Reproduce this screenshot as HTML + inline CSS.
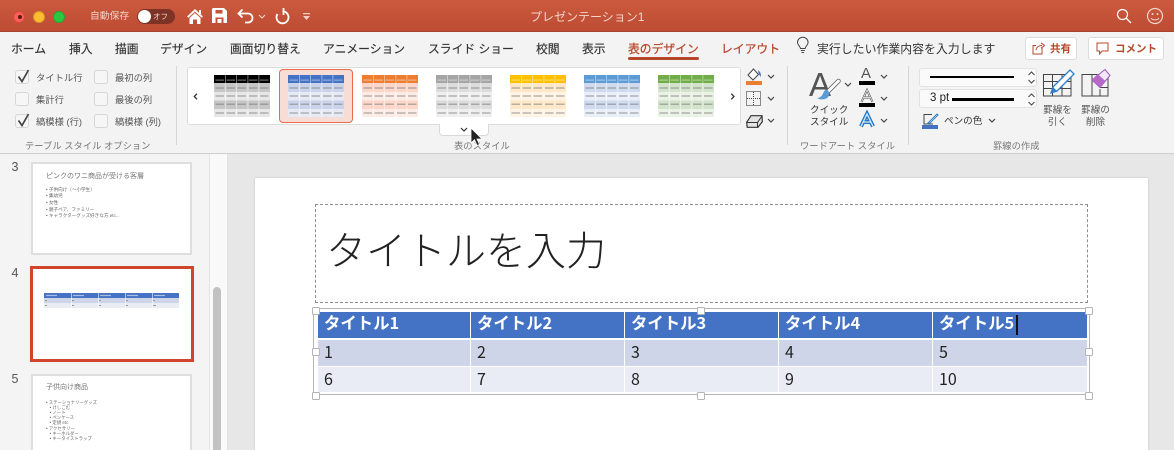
<!DOCTYPE html>
<html lang="ja"><head><meta charset="utf-8"><title>プレゼンテーション1</title>
<style>
*{box-sizing:border-box}
html,body{margin:0;padding:0;width:1174px;height:450px;overflow:hidden;background:#f3f3f3}
body{position:relative;font-family:"Liberation Sans","Noto Sans CJK JP",sans-serif;color:#333}
.a{position:absolute;white-space:nowrap}
.tab{position:absolute;top:41px;font-size:11.8px;line-height:16px;color:#333;white-space:nowrap;-webkit-text-stroke:.15px #333}
.lb{position:absolute;font-size:9.3px;line-height:14px;color:#555;white-space:nowrap}
.gl{position:absolute;top:138.500px;font-size:9.3px;line-height:14px;color:#777;white-space:nowrap}
.cb{position:absolute;width:14px;height:14px;background:#f6f6f6;border:1px solid #d6d6d6;border-radius:3px}
.sep{position:absolute;top:66px;height:79px;width:1px;background:#d6d6d6}
svg{position:absolute;overflow:visible}
.th{position:absolute;background:#4472c4;color:#fff;font-family:"Noto Sans CJK JP",sans-serif;font-weight:700;font-size:16.4px;line-height:20px;padding-left:6px;white-space:nowrap}
.c{position:absolute;height:26px;font-family:"Noto Sans CJK JP",sans-serif;font-size:16px;line-height:22px;padding-left:6px;color:#222}
.h{position:absolute;width:8px;height:8px;background:#fff;border:1px solid #b4b4b4;border-radius:1.5px}
.mini{position:absolute;font-size:4.6px;line-height:6.700px;color:#666;white-space:nowrap;filter:blur(.25px)}
.t{filter:blur(.25px)}
</style></head><body>
<svg width="0" height="0" style="position:absolute">
<defs>
<symbol id="tb" viewBox="0 0 56 42" overflow="visible">
<rect x="0" y="0" width="56" height="8" fill="currentColor"/>
<rect x="0" y="8" width="56" height="9" style="fill:var(--a)"/>
<rect x="0" y="17" width="56" height="8.500" style="fill:var(--b)"/>
<rect x="0" y="25.500" width="56" height="8.500" style="fill:var(--a)"/>
<rect x="0" y="34" width="56" height="8" style="fill:var(--b)"/>
<g fill="#fff" opacity=".55"><rect x="11" width=".8" height="42"/><rect x="22" width=".8" height="42"/><rect x="33.500" width=".8" height="42"/><rect x="44.500" width=".8" height="42"/></g>
<g fill="#fff" opacity=".8"><path d="M1.500 4.700h8.500v.7H1.500zM12.500 4.700H21v.7h-8.500zM23.500 4.700H32v.7h-8.500zM35 4.700h8.500v.7H35zM46 4.700h8.500v.7H46z"/></g>
<g fill="#757575"><path d="M1.500 12.600h8.500v.8H1.500zM12.500 12.600H21v.8h-8.500zM23.500 12.600H32v.8h-8.500zM35 12.600h8.500v.8H35zM46 12.600h8.500v.8H46zM1.500 20.600h8.500v.8H1.500zM12.500 20.600H21v.8h-8.500zM23.500 20.600H32v.8h-8.500zM35 20.600h8.500v.8H35zM46 20.600h8.500v.8H46zM1.500 28.700h8.500v.8H1.500zM12.500 28.700H21v.8h-8.500zM23.500 28.700H32v.8h-8.500zM35 28.700h8.500v.8H35zM46 28.700h8.500v.8H46zM1.500 37.600h8.500v.8H1.500zM12.500 37.600H21v.8h-8.500zM23.500 37.600H32v.8h-8.500zM35 37.600h8.500v.8H35zM46 37.600h8.500v.8H46z"/></g>
</symbol>
</defs></svg>

<!-- title bar -->
<div class="a" style="left:0;top:0;width:1174px;height:32px;background:linear-gradient(#cb5a3e,#bd4c33);border-bottom:1px solid #a8432d"></div>
<div class="a" style="left:13px;top:11px;width:12px;height:12px;border-radius:50%;background:#fc5f57;border:1px solid #d9483f"></div>
<div class="a" style="left:17.500px;top:15px;width:4px;height:4px;border-radius:50%;background:#5a1a14"></div>
<div class="a" style="left:33px;top:11px;width:12px;height:12px;border-radius:50%;background:#fdbc2e;border:1px solid #d8992a"></div>
<div class="a" style="left:53px;top:11px;width:12px;height:12px;border-radius:50%;background:#2ac73f;border:1px solid #27a336"></div>
<div class="a" style="left:90px;top:9px;font-size:9.800px;line-height:16px;color:#f1cfc5">自動保存</div>
<div class="a" style="left:137px;top:9px;width:38px;height:15px;border-radius:8px;background:#7d3325"></div>
<div class="a" style="left:138px;top:10px;width:13px;height:13px;border-radius:50%;background:#fff"></div>
<div class="a" style="left:153px;top:10.500px;font-size:7.500px;line-height:12px;color:#eed5cd">オフ</div>
<svg style="left:186px;top:8px" width="18" height="16" viewBox="0 0 18 16"><path d="M9 1 1 8.500l1.300 1.300L9 3.600l6.700 6.200L17 8.500z" fill="#fff"/><path d="M3.500 10 9 5l5.500 5v6H11v-4.500H7V16H3.500z" fill="#fff"/><rect x="13" y="2" width="2" height="4" fill="#fff"/></svg>
<svg style="left:212px;top:8px" width="15" height="15" viewBox="0 0 15 15"><path d="M1 0h11l3 3v12H0V1z" fill="#fff"/><rect x="3.500" y="2" width="7" height="3.500" fill="#c5533a"/><rect x="3.500" y="9.500" width="8" height="5.500" fill="#c5533a"/><rect x="5.500" y="11" width="4" height="4" fill="#fff"/></svg>
<svg style="left:237px;top:8px" width="17" height="16" viewBox="0 0 17 16"><path d="M5.500 1.500 1.500 5.500l4 4M1.500 5.500H11a4.500 4.500 0 0 1 0 9H8" fill="none" stroke="#fff" stroke-width="1.800"/></svg>
<svg style="left:258px;top:14px" width="8" height="5" viewBox="0 0 8 5"><path d="M1 1l3 3 3-3" fill="none" stroke="#f5d9d0" stroke-width="1.100"/></svg>
<svg style="left:274px;top:8px" width="16" height="17" viewBox="0 0 16 17"><path d="M3.500 6A6 6 0 1 0 10 3.500" fill="none" stroke="#fff" stroke-width="1.800"/><path d="M9.500 0v7" stroke="#fff" stroke-width="1.800"/></svg>
<svg style="left:303px;top:13px" width="8" height="8" viewBox="0 0 8 8"><path d="M0 0h7v1.300H0zM0 3h7L3.500 7z" fill="#f1cfc5"/></svg>
<div class="a" style="left:530px;top:9px;font-size:12px;line-height:16px;color:#f3d5cc">プレゼンテーション1</div>
<svg style="left:1116px;top:8px" width="16" height="16" viewBox="0 0 16 16"><circle cx="6.500" cy="6.500" r="5" fill="none" stroke="#fff" stroke-width="1.200"/><path d="M10 10l5 5" stroke="#fff" stroke-width="1.300"/></svg>
<svg style="left:1146px;top:7px" width="18" height="18" viewBox="0 0 18 18"><circle cx="9" cy="9" r="7.500" fill="none" stroke="#f3d5cc" stroke-width="1.200"/><circle cx="6.500" cy="7" r="1" fill="#f3d5cc"/><circle cx="11.500" cy="7" r="1" fill="#f3d5cc"/><path d="M5 11c1.500 2.500 6.500 2.500 8 0" fill="none" stroke="#f3d5cc" stroke-width="1.100"/></svg>

<!-- tabs -->
<div class="tab" style="left:11px">ホーム</div>
<div class="tab" style="left:69px">挿入</div>
<div class="tab" style="left:115px">描画</div>
<div class="tab" style="left:160px">デザイン</div>
<div class="tab" style="left:230px">画面切り替え</div>
<div class="tab" style="left:323px">アニメーション</div>
<div class="tab" style="left:428px">スライド ショー</div>
<div class="tab" style="left:536px">校閲</div>
<div class="tab" style="left:582px">表示</div>
<div class="tab" style="left:628px;color:#b7472a;-webkit-text-stroke:.25px #b7472a">表のデザイン</div>
<div class="a" style="left:628px;top:57px;width:71px;height:2.500px;border-radius:2px;background:#b7472a"></div>
<div class="tab" style="left:721px;color:#b7472a;-webkit-text-stroke:.25px #b7472a">レイアウト</div>
<svg style="left:796px;top:37px" width="14" height="17" viewBox="0 0 14 17"><path d="M4.500 11.500C4 9 1.500 8 1.500 5.500a5.300 5.300 0 0 1 10.600 0c0 2.500-2.500 3.500-3 6z" fill="none" stroke="#444" stroke-width="1"/><path d="M4.800 13.500h4M5.500 15.500h2.600" stroke="#444" stroke-width="1"/></svg>
<div class="a" style="left:817px;top:41px;font-size:11.900px;line-height:16px;color:#333">実行したい作業内容を入力します</div>
<div class="a" style="left:1025px;top:37px;width:52px;height:23px;background:#fff;border:1px solid #dcdcdc;border-radius:3px"></div>
<svg style="left:1032px;top:42px" width="14" height="13" viewBox="0 0 14 13"><path d="M10 5.500V12H1V3.500h3" fill="none" stroke="#b7472a" stroke-width="1"/><path d="M4 8c.5-3 3-4.500 6-4.500M9 .8l3.500 2.700L9 6.200" fill="none" stroke="#b7472a" stroke-width="1"/></svg>
<div class="a" style="left:1050px;top:41px;font-size:10.500px;line-height:16px;font-weight:700;color:#b7472a">共有</div>
<div class="a" style="left:1088px;top:37px;width:76px;height:23px;background:#fff;border:1px solid #dcdcdc;border-radius:3px"></div>
<svg style="left:1096px;top:42px" width="14" height="13" viewBox="0 0 14 13"><path d="M1 1h11v8H6l-2.500 3V9H1z" fill="none" stroke="#b7472a" stroke-width="1"/></svg>
<div class="a" style="left:1115px;top:41px;font-size:10.500px;line-height:16px;font-weight:700;color:#b7472a">コメント</div>

<!-- table style options -->
<div class="cb" style="left:15px;top:70px"></div><div class="cb" style="left:15px;top:92px"></div><div class="cb" style="left:15px;top:114px"></div>
<div class="cb" style="left:94px;top:70px"></div><div class="cb" style="left:94px;top:92px"></div><div class="cb" style="left:94px;top:114px"></div>
<svg style="left:16px;top:69px" width="14" height="14" viewBox="0 0 14 14"><path d="M2.500 7.500 6 12.500 12.500 1" fill="none" stroke="#444" stroke-width="1.700"/></svg>
<svg style="left:16px;top:113px" width="14" height="14" viewBox="0 0 14 14"><path d="M2.500 7.500 6 12.500 12.500 1" fill="none" stroke="#444" stroke-width="1.700"/></svg>
<div class="lb" style="left:36px;top:71px">タイトル行</div><div class="lb" style="left:36px;top:93px">集計行</div><div class="lb" style="left:36px;top:115px">縞模様 (行)</div>
<div class="lb" style="left:115px;top:71px">最初の列</div><div class="lb" style="left:115px;top:93px">最後の列</div><div class="lb" style="left:115px;top:115px">縞模様 (列)</div>
<div class="gl" style="left:25px">テーブル スタイル オプション</div>
<div class="sep" style="left:176px"></div>

<!-- gallery -->
<div class="a" style="left:187px;top:67px;width:554px;height:58px;background:#fff;border:1px solid #dcdcdc;border-radius:3px"></div>
<div class="a" style="left:439px;top:124px;width:50px;height:12px;background:#fff;border:1px solid #d8d8d8;border-top:0;border-radius:0 0 4px 4px"></div>
<div class="a" style="left:440px;top:123px;width:48px;height:3px;background:#fff"></div>
<div class="a" style="left:279px;top:69px;width:74px;height:54px;background:#f8dcd6;border:1px solid #e8694e;border-radius:4px"></div>
<svg class="t" style="left:214px;top:75px;color:#000;--a:#c6c6c6;--b:#e7e7e7" width="56" height="42"><use href="#tb"/></svg>
<svg class="t" style="left:288px;top:75px;color:#4472c4;--a:#c9d3ea;--b:#e7eaf5" width="56" height="42"><use href="#tb"/></svg>
<svg class="t" style="left:362px;top:75px;color:#ed7d31;--a:#fbd6c9;--b:#fdece5" width="56" height="42"><use href="#tb"/></svg>
<svg class="t" style="left:436px;top:75px;color:#a5a5a5;--a:#dcdcdc;--b:#efefef" width="56" height="42"><use href="#tb"/></svg>
<svg class="t" style="left:510px;top:75px;color:#ffc000;--a:#ffe7c8;--b:#fff3e3" width="56" height="42"><use href="#tb"/></svg>
<svg class="t" style="left:584px;top:75px;color:#5b9bd5;--a:#cfdaee;--b:#e9eff8" width="56" height="42"><use href="#tb"/></svg>
<svg class="t" style="left:658px;top:75px;color:#70ad47;--a:#d3e3cb;--b:#eaf1e5" width="56" height="42"><use href="#tb"/></svg>
<svg style="left:193px;top:93px" width="6" height="7" viewBox="0 0 6 7"><path d="M4 .7 1.300 3.500 4 6.300" fill="none" stroke="#333" stroke-width="1.300"/></svg>
<svg style="left:730px;top:93px" width="6" height="7" viewBox="0 0 6 7"><path d="M1.300 .7 4 3.500 1.300 6.300" fill="none" stroke="#333" stroke-width="1.300"/></svg>
<svg style="left:460px;top:127px" width="8" height="6" viewBox="0 0 8 6"><path d="M1 1l3 3 3-3" fill="none" stroke="#333" stroke-width="1.200"/></svg>
<div class="gl" style="left:454px">表のスタイル</div>
<svg style="left:470px;top:128px" width="13" height="19" viewBox="0 0 13 19"><path d="M1 0v15l3.500-3.300L7 17.500l2.500-1L7 11h5z" fill="#222" stroke="#fff" stroke-width=".8"/></svg>

<!-- shading/border/eraser -->
<svg style="left:746px;top:68px" width="16" height="17" viewBox="0 0 16 17"><path d="M7.500 1 2 7l5 5 5.500-5.500z" fill="#fff" stroke="#444"/><path d="M12 2c2.500 2 3.500 4.500 2.500 7l-2-4z" fill="#3a78c4"/><rect y="13" width="16" height="4" fill="#ed7d31"/></svg>
<svg style="left:746px;top:91px" width="15" height="15" viewBox="0 0 15 15"><rect x=".5" y=".5" width="14" height="14" fill="none" stroke="#222" stroke-dasharray="1 1"/><path d="M7.500 1v13M1 7.500h13" stroke="#444" stroke-dasharray="1 1"/></svg>
<svg style="left:746px;top:115px" width="17" height="13" viewBox="0 0 17 13"><path d="M5 .7h11l.3 6L12 12.300H1.200l-.5-5z" fill="#e4e4e4" stroke="#333" stroke-width="1.200"/><path d="M1 7.500h10.500L16 1M11.500 7.500v4.500" fill="none" stroke="#333" stroke-width="1"/></svg>
<svg style="left:767px;top:74px" width="8" height="6" viewBox="0 0 8 6"><path d="M1 1l3 3 3-3" fill="none" stroke="#444" stroke-width="1.200"/></svg>
<svg style="left:767px;top:96px" width="8" height="6" viewBox="0 0 8 6"><path d="M1 1l3 3 3-3" fill="none" stroke="#444" stroke-width="1.200"/></svg>
<svg style="left:767px;top:118px" width="8" height="6" viewBox="0 0 8 6"><path d="M1 1l3 3 3-3" fill="none" stroke="#444" stroke-width="1.200"/></svg>
<div class="sep" style="left:787px"></div>

<!-- wordart -->
<div class="a" style="left:809px;top:66px;font-size:33px;line-height:38px;color:#555;font-family:'Liberation Sans',sans-serif">A</div>
<svg style="left:817px;top:79px" width="24" height="22" viewBox="0 0 24 22"><path d="M21.500 2 11 12.500" stroke="#666" stroke-width="4.500" stroke-linecap="round"/><path d="M21.500 2 11 12.500" stroke="#fff" stroke-width="2.800" stroke-linecap="round"/><path d="M9.500 10.500c-3 .5-3 4.500-5 6.500-1 1-3 2-4.500 2 4 2.500 9.500 1.500 11.500-1.500 1.500-2.500 1-5.500-2-7z" fill="#5b9bd5"/></svg>
<svg style="left:844px;top:82px" width="8" height="6" viewBox="0 0 8 6"><path d="M1 1l3 3 3-3" fill="none" stroke="#444" stroke-width="1.200"/></svg>
<div class="lb" style="left:810px;top:105px;font-size:9.600px;line-height:12px;color:#333">クイック<br>スタイル</div>
<div class="a" style="left:861px;top:65px;font-size:15px;line-height:18px;color:#555">A</div><div class="a" style="left:859px;top:81px;width:16px;height:4px;background:#000"></div>
<svg style="left:859px;top:88px" width="16" height="19" viewBox="0 0 16 19"><path d="M2.500 14 8 2l5.500 12M4.800 9.500h6.400" fill="none" stroke="#555" stroke-width="2"/><path d="M2.500 14 8 2l5.500 12M4.800 9.500h6.400" fill="none" stroke="#fff" stroke-width=".7"/><rect y="15" width="16" height="4" fill="#000"/></svg>
<svg style="left:859px;top:112px" width="16" height="16" viewBox="0 0 16 16"><path d="M2 14.500 8 2l6 12.500M4.500 10h7" fill="none" stroke="#1f78c8" stroke-width="4"/><path d="M2 14.500 8 2l6 12.500M4.500 10h7" fill="none" stroke="#d8e9f8" stroke-width="1.300"/></svg>
<svg style="left:880px;top:74px" width="8" height="6" viewBox="0 0 8 6"><path d="M1 1l3 3 3-3" fill="none" stroke="#444" stroke-width="1.200"/></svg>
<svg style="left:880px;top:96px" width="8" height="6" viewBox="0 0 8 6"><path d="M1 1l3 3 3-3" fill="none" stroke="#444" stroke-width="1.200"/></svg>
<svg style="left:880px;top:118px" width="8" height="6" viewBox="0 0 8 6"><path d="M1 1l3 3 3-3" fill="none" stroke="#444" stroke-width="1.200"/></svg>
<div class="gl" style="left:800px">ワードアート スタイル</div>
<div class="sep" style="left:908px"></div>

<!-- borders -->
<div class="a" style="left:919px;top:68px;width:118px;height:19px;background:#fafafa;border:1px solid #e2e2e2;border-radius:3px"></div>
<div class="a" style="left:930px;top:76px;width:84px;height:2px;background:#000"></div>
<div class="a" style="left:919px;top:89px;width:118px;height:19px;background:#fafafa;border:1px solid #e2e2e2;border-radius:3px"></div>
<div class="a" style="left:930px;top:90px;font-size:11.500px;line-height:16px;color:#222">3 pt</div>
<div class="a" style="left:952px;top:97.500px;width:62px;height:3px;background:#000"></div>
<svg style="left:1027px;top:70px" width="9" height="15" viewBox="0 0 9 15"><path d="M1.500 5 4.500 2l3 3M1.500 10l3 3 3-3" fill="none" stroke="#444" stroke-width="1"/></svg>
<svg style="left:1027px;top:92px" width="9" height="15" viewBox="0 0 9 15"><path d="M1.500 5 4.500 2l3 3M1.500 10l3 3 3-3" fill="none" stroke="#444" stroke-width="1"/></svg>
<svg style="left:922px;top:113px" width="17" height="16" viewBox="0 0 17 16"><path d="M10 1.500H2V11h9" fill="none" stroke="#444"/><path d="M15 1 7 9l-2 2 3-1 8-8z" fill="#fff" stroke="#2f7fc9"/><rect y="12" width="16" height="4" fill="#4472c4"/></svg>
<div class="lb" style="left:944px;top:115px;font-size:9.600px;color:#333">ペンの色</div>
<svg style="left:988px;top:118px" width="8" height="6" viewBox="0 0 8 6"><path d="M1 1l3 3 3-3" fill="none" stroke="#444" stroke-width="1.200"/></svg>
<svg style="left:1043px;top:69px" width="32" height="29" viewBox="0 0 32 29"><path d="M.5 5.500h27.500V27H.5zM.5 12.500h27.500M.5 19.500h27.500M9.500 5.500V27M19 5.500V27" fill="none" stroke="#444" stroke-width="1"/><path d="M27 1 10 18l-2 6 6-2L31 5z" fill="#fff" stroke="#2f7fc9" stroke-width="1.300"/><path d="M10 18l-2 6 6-2z" fill="#2f7fc9"/></svg>
<div class="lb" style="left:1043px;top:105px;font-size:9.600px;line-height:12px;text-align:center;width:29px">罫線を<br>引く</div>
<svg style="left:1081px;top:69px" width="32" height="29" viewBox="0 0 32 29"><path d="M1 5.500h26V27H1zM11 5.500V27M19 20V27M19 18.500h8" fill="none" stroke="#444" stroke-width="1"/><path d="M24 .5 11 11l8 7.500 10-12z" fill="#f3e8f7" stroke="#9b59b6"/><path d="M11 11l8 7.500 5.500-6.500-8-7z" fill="#b768c9"/></svg>
<div class="lb" style="left:1081px;top:105px;font-size:9.600px;line-height:12px;text-align:center;width:29px">罫線の<br>削除</div>
<div class="gl" style="left:993px">罫線の作成</div>
<div class="a" style="left:0;top:153px;width:1174px;height:1px;background:#cfcfcf"></div>

<!-- left pane -->
<div class="a" style="left:0;top:154px;width:210px;height:296px;background:#f4f4f4"></div>
<div class="a" style="left:209px;top:154px;width:19px;height:296px;background:#f9f9f9;border-left:1px solid #e4e4e4;border-right:1px solid #e2e2e2"></div>
<div class="a" style="left:213px;top:287px;width:8px;height:170px;border-radius:4px;background:#c2c2c2"></div>
<div class="a" style="left:228px;top:154px;width:946px;height:296px;background:#e7e7e7"></div>
<div class="a" style="left:11.500px;top:159px;font-size:12.500px;line-height:16px;color:#555">3</div>
<div class="a" style="left:11.500px;top:265px;font-size:12.500px;line-height:16px;color:#555">4</div>
<div class="a" style="left:11.500px;top:371px;font-size:12.500px;line-height:16px;color:#555">5</div>

<div class="a" style="left:31px;top:162px;width:161px;height:93px;background:#fff;border:2px solid #dedede"></div>
<div class="mini" style="left:46px;top:171.500px;font-size:7px;line-height:9px;color:#777">ピンクのワニ商品が受ける客層</div>
<div class="mini" style="left:46px;top:186.500px">• 子供向け（〜小学生）<br>• 集幼児<br>• 女性<br>• 親子ペア、ファミリー<br>• キャラクターグッズ好きな方 etc...</div>

<div class="a" style="left:30px;top:266px;width:164px;height:96px;background:#fff;border:3px solid #d2452d"></div>
<svg class="t" style="left:44px;top:293px" width="136" height="15" viewBox="0 0 136 15"><rect width="135" height="5" fill="#4472c4"/><rect y="5" width="135" height="5" fill="#cfd5e8"/><rect y="10" width="135" height="5" fill="#e9ebf5"/><path d="M27.500 0v15M54.500 0v15M81.500 0v15M108.500 0v15" stroke="#fff" stroke-width=".6"/><path d="M2 2.500h11M29 2.500h11M56 2.500h11M83 2.500h11M110 2.500h11" stroke="#a8bce2" stroke-width="1.300"/><path d="M1 7.500h2M28 7.500h2M55 7.500h2M82 7.500h2M109 7.500h2M1 12.500h2M28 12.500h2M55 12.500h2M82 12.500h2M109 12.500h3" stroke="#999" stroke-width=".9"/></svg>

<div class="a" style="left:31px;top:374px;width:161px;height:90px;background:#fff;border:2px solid #dedede"></div>
<div class="mini" style="left:46px;top:383px;font-size:7px;line-height:10px;color:#777">子供向け商品</div>
<div class="mini" style="left:46px;top:399.500px;line-height:5px;font-size:4.400px">• ステーショナリーグッズ<br>&nbsp;&nbsp;&nbsp;• けしごむ<br>&nbsp;&nbsp;&nbsp;• ノート<br>&nbsp;&nbsp;&nbsp;• ペンケース<br>&nbsp;&nbsp;&nbsp;• 定規 etc<br><span style="display:block;height:1.500px"></span>• アクセサリー<br>&nbsp;&nbsp;&nbsp;• キーホルダー<br>&nbsp;&nbsp;&nbsp;• キータイストラップ</div>

<!-- slide -->
<div class="a" style="left:255px;top:178px;width:893px;height:280px;background:#fff;box-shadow:0 0 2px rgba(0,0,0,.18)"></div>
<div class="a" style="left:315px;top:204px;width:773px;height:99px;border:1px dashed #8f8f8f"></div>
<div class="a" style="left:326px;top:219px;font-size:40px;line-height:58px;color:#222;font-weight:300;font-family:'Noto Sans CJK JP',sans-serif">タイトルを入力</div>
<div class="a" style="left:313px;top:308px;width:777px;height:87px;border:1px solid #b5b5b5;border-width:1.500px"></div>
<div class="a" style="left:317px;top:312px;width:770px;height:81px;background:#fff"></div>
<div class="th" style="left:318px;width:152px;top:312px;height:26px">タイトル1</div>
<div class="th" style="left:471px;width:153px;top:312px;height:26px">タイトル2</div>
<div class="th" style="left:625px;width:153px;top:312px;height:26px">タイトル3</div>
<div class="th" style="left:779px;width:153px;top:312px;height:26px">タイトル4</div>
<div class="th" style="left:933px;width:154px;top:312px;height:26px">タイトル5</div>
<div class="a" style="left:1016px;top:315px;width:1.500px;height:20px;background:#111"></div>
<div class="c" style="left:318px;width:152px;top:340px;background:#cfd5e8">1</div><div class="c" style="left:471px;width:153px;top:340px;background:#cfd5e8">2</div><div class="c" style="left:625px;width:153px;top:340px;background:#cfd5e8">3</div><div class="c" style="left:779px;width:153px;top:340px;background:#cfd5e8">4</div><div class="c" style="left:933px;width:154px;top:340px;background:#cfd5e8">5</div>
<div class="c" style="left:318px;width:152px;top:367px;height:25px;background:#e9ebf5">6</div><div class="c" style="left:471px;width:153px;top:367px;height:25px;background:#e9ebf5">7</div><div class="c" style="left:625px;width:153px;top:367px;height:25px;background:#e9ebf5">8</div><div class="c" style="left:779px;width:153px;top:367px;height:25px;background:#e9ebf5">9</div><div class="c" style="left:933px;width:154px;top:367px;height:25px;background:#e9ebf5">10</div>
<div class="h" style="left:312px;top:307px"></div><div class="h" style="left:697px;top:307px"></div><div class="h" style="left:1085px;top:307px"></div>
<div class="h" style="left:312px;top:348px"></div><div class="h" style="left:1085px;top:348px"></div>
<div class="h" style="left:312px;top:392px"></div><div class="h" style="left:697px;top:392px"></div><div class="h" style="left:1085px;top:392px"></div>
</body></html>
